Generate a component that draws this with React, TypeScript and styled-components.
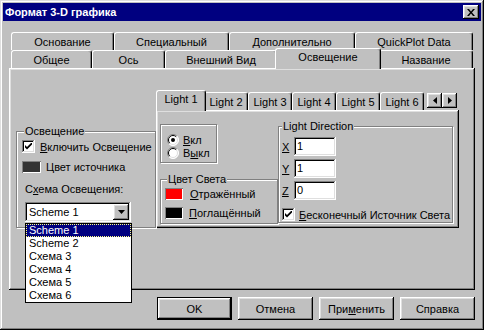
import React from "react";
import styled, { createGlobalStyle, css } from "styled-components";

const GlobalStyle = createGlobalStyle`
  html, body {
    margin: 0;
    padding: 0;
    background: #c0c0c0;
  }
  body {
    font-family: "Liberation Sans", Arial, sans-serif;
    font-size: 11px;
    color: #000;
  }
  * {
    box-sizing: border-box;
  }
`;

const raised = css`
  box-shadow: inset -1px -1px #000, inset 1px 1px #fff, inset -2px -2px #808080, inset 2px 2px #dfdfdf;
`;

const sunken = css`
  box-shadow: inset -1px -1px #fff, inset 1px 1px #808080, inset -2px -2px #dfdfdf, inset 2px 2px #000;
`;

const Window = styled.div`
  width: 484px;
  height: 330px;
  padding: 3px;
  background: #c0c0c0;
  display: flex;
  flex-direction: column;
  box-shadow: inset -1px -1px #000, inset 1px 1px #dfdfdf, inset -2px -2px #808080, inset 2px 2px #fff;
`;

const TitleBar = styled.div`
  height: 18px;
  background: #000080;
  color: #fff;
  display: flex;
  align-items: center;
  justify-content: space-between;
  padding: 0 2px 0 2px;
`;

const TitleText = styled.span`
  font-weight: bold;
  font-size: 11px;
`;

const CloseButton = styled.div`
  width: 16px;
  height: 14px;
  background: #c0c0c0;
  display: flex;
  align-items: center;
  justify-content: center;
  ${raised}
`;

const Body = styled.div`
  display: flex;
  flex-direction: column;
  padding: 11px 6px 0 6px;
`;

const TabStrip = styled.div`
  display: flex;
  flex-direction: column;
  padding: 0 2px;
`;

const TabRow = styled.div`
  display: flex;
  align-items: flex-start;
  height: 18px;
`;

const Tab = styled.div<{ $w: number; $active?: boolean }>`
  position: relative;
  width: ${(p) => p.$w}px;
  height: 18px;
  flex: none;
  display: flex;
  align-items: center;
  justify-content: center;
  white-space: nowrap;
  background: #c0c0c0;
  border-top: 1px solid #fff;
  border-left: 1px solid #fff;
  border-right: 1px solid #000;
  border-radius: 3px 3px 0 0;
  box-shadow: inset -1px 0 #808080;
  ${(p) =>
    p.$active &&
    css`
      width: ${p.$w + 4}px;
      height: 21px;
      margin: -2px -2px -1px -2px;
      padding-bottom: 4px;
      z-index: 2;
    `}
`;

const Panel = styled.div`
  width: 466px;
  height: 222px;
  display: flex;
  align-items: flex-start;
  padding: 22px 0 0 7px;
  ${raised}
`;

const Group = styled.div<{ $w: number; $h: number }>`
  position: relative;
  flex: none;
  width: ${(p) => p.$w}px;
  height: ${(p) => p.$h}px;
  border: 1px solid #808080;
  box-shadow: inset 1px 1px #fff, 1px 1px #fff;
`;

const Caption = styled.span<{ $left: number }>`
  position: absolute;
  top: -7px;
  left: ${(p) => p.$left}px;
  padding: 0 1px;
  line-height: 13px;
  background: #c0c0c0;
  white-space: nowrap;
`;

const LightingGroup = styled(Group)`
  margin-top: 41px;
  padding: 8px 0 0 5px;
  display: flex;
  flex-direction: column;
`;

const Row = styled.div<{ $gap: number; $top?: number }>`
  display: flex;
  align-items: center;
  gap: ${(p) => p.$gap}px;
  height: 13px;
  margin-top: ${(p) => p.$top ?? 0}px;
  white-space: nowrap;
`;

const CheckBox = styled.span`
  width: 13px;
  height: 13px;
  flex: none;
  background: #fff;
  display: flex;
  align-items: center;
  justify-content: center;
  ${sunken}
`;

const Swatch = styled.span<{ $color: string; $w: number }>`
  width: ${(p) => p.$w}px;
  height: 12px;
  flex: none;
  background: ${(p) => p.$color};
  box-shadow: inset 1px 1px #808080, inset -1px -1px #fff;
`;

const FieldLabel = styled.div`
  margin: 10px 0 0 3px;
  line-height: 13px;
`;

const Combo = styled.div`
  position: relative;
  width: 106px;
  height: 20px;
  margin: 6px 0 0 3px;
  background: #fff;
  display: flex;
  align-items: center;
  justify-content: space-between;
  padding: 0 2px 0 4px;
  ${sunken}
`;

const DropButton = styled.span`
  width: 16px;
  height: 16px;
  background: #c0c0c0;
  display: flex;
  align-items: center;
  justify-content: center;
  ${raised}
`;

const DropList = styled.div`
  position: absolute;
  top: 21px;
  left: 0;
  width: 107px;
  background: #fff;
  border: 1px solid #000;
  z-index: 10;
`;

const DropItem = styled.div<{ $selected?: boolean }>`
  height: 13px;
  line-height: 11px;
  padding-left: 2px;
  border: 1px solid transparent;
  ${(p) =>
    p.$selected &&
    css`
      background: #000080;
      color: #fff;
      border: 1px dotted #ffff80;
    `}
`;

const InnerTabs = styled.div`
  width: 303px;
  flex: none;
  display: flex;
  flex-direction: column;
`;

const InnerTabRow = styled.div`
  display: flex;
  align-items: flex-start;
  height: 18px;
  margin-top: 2px;
  padding-left: 2px;
`;

const ScrollArrows = styled.div`
  display: flex;
  margin: 1px 2px 0 auto;
`;

const ArrowButton = styled.span`
  width: 15px;
  height: 15px;
  background: #c0c0c0;
  display: flex;
  align-items: center;
  justify-content: center;
  ${raised}
`;

const InnerPanel = styled.div`
  height: 118px;
  display: flex;
  align-items: flex-start;
  padding: 14px 0 0 4px;
  ${raised}
`;

const LeftColumn = styled.div`
  width: 118px;
  flex: none;
  display: flex;
  flex-direction: column;
`;

const RadioBox = styled(Group)`
  padding: 8px 0 0 6px;
`;

const ColorBox = styled(Group)`
  margin-top: 16px;
  padding: 7px 0 0 4px;
`;

const DirectionBox = styled(Group)`
  margin-top: 2px;
  padding: 10px 0 0 3px;
`;

const AxisRow = styled.div<{ $top: number }>`
  display: flex;
  align-items: center;
  height: 19px;
  margin-top: ${(p) => p.$top}px;
`;

const AxisLabel = styled.span`
  width: 12px;
`;

const NumberField = styled.div`
  width: 42px;
  height: 19px;
  background: #fff;
  line-height: 19px;
  padding-left: 3px;
  ${sunken}
`;

const ButtonRow = styled.div`
  display: flex;
  justify-content: flex-end;
  gap: 6px;
  margin-top: 7px;
`;

const Button = styled.button<{ $default?: boolean }>`
  width: 75px;
  height: 23px;
  padding: 0;
  font: inherit;
  color: #000;
  background: #c0c0c0;
  border: ${(p) => (p.$default ? "1px solid #000" : "none")};
  ${raised}
`;

const Check = () => (
  <svg width="7" height="7" viewBox="0 0 7 7">
    <path d="M0 2 L2 4 L7 -1 L7 1.5 L2 6.5 L0 4.5 Z" fill="#000" />
  </svg>
);

const Radio = ({ on }: { on?: boolean }) => (
  <svg width="12" height="12" viewBox="0 0 12 12" style={{ flex: "none" }}>
    <circle cx="6" cy="6" r="5.5" fill="#fff" />
    <path d="M2.1 9.9 A5.5 5.5 0 0 1 9.9 2.1" stroke="#808080" fill="none" />
    <path d="M9.9 2.1 A5.5 5.5 0 0 1 2.1 9.9" stroke="#fff" fill="none" />
    <path d="M2.8 9.2 A4.5 4.5 0 0 1 9.2 2.8" stroke="#000" fill="none" />
    <path d="M9.2 2.8 A4.5 4.5 0 0 1 2.8 9.2" stroke="#dfdfdf" fill="none" />
    {on && <circle cx="6" cy="6" r="2" fill="#000" />}
  </svg>
);

const outerRow1 = [
  { label: "Основание", w: 103 },
  { label: "Специальный", w: 115 },
  { label: "Дополнительно", w: 126 },
  { label: "QuickPlot Data", w: 118 },
];

const outerRow2 = [
  { label: "Общее", w: 81 },
  { label: "Ось", w: 73 },
  { label: "Внешний Вид", w: 112 },
  { label: "Освещение", w: 102, active: true },
  { label: "Название", w: 94 },
];

const lightTabs = ["Light 1", "Light 2", "Light 3", "Light 4", "Light 5", "Light 6"];

const schemes = ["Scheme 1", "Scheme 2", "Схема 3", "Схема 4", "Схема 5", "Схема 6"];

const App = () => {
  return (
    <>
      <GlobalStyle />
      <Window>
        <TitleBar>
          <TitleText>Формат 3-D графика</TitleText>
          <CloseButton>
            <svg width="8" height="7" viewBox="0 0 8 7">
              <path d="M0 0 H2 L4 2.4 L6 0 H8 L5 3.5 L8 7 H6 L4 4.6 L2 7 H0 L3 3.5 Z" fill="#000" />
            </svg>
          </CloseButton>
        </TitleBar>
        <Body>
          <TabStrip>
            <TabRow>
              {outerRow1.map((t) => (
                <Tab key={t.label} $w={t.w}>
                  {t.label}
                </Tab>
              ))}
            </TabRow>
            <TabRow>
              {outerRow2.map((t) => (
                <Tab key={t.label} $w={t.w} $active={t.active}>
                  {t.label}
                </Tab>
              ))}
            </TabRow>
          </TabStrip>
          <Panel>
            <LightingGroup $w={140} $h={97}>
              <Caption $left={7}>Освещение</Caption>
              <Row $gap={5}>
                <CheckBox>
                  <Check />
                </CheckBox>
                <span>
                  <u>В</u>ключить Освещение
                </span>
              </Row>
              <Row $gap={5} $top={7}>
                <Swatch $color="#333333" $w={19} />
                <span>Цвет источника</span>
              </Row>
              <FieldLabel>
                С<u>х</u>ема Освещения:
              </FieldLabel>
              <Combo>
                <span>Scheme 1</span>
                <DropButton>
                  <svg width="7" height="4" viewBox="0 0 7 4">
                    <path d="M0 0 H7 L3.5 4 Z" fill="#000" />
                  </svg>
                </DropButton>
                <DropList>
                  {schemes.map((s, i) => (
                    <DropItem key={s} $selected={i === 0}>
                      {s}
                    </DropItem>
                  ))}
                </DropList>
              </Combo>
            </LightingGroup>

            <InnerTabs>
              <InnerTabRow>
                {lightTabs.map((t, i) => (
                  <Tab key={t} $w={i === 0 ? 46 : 44} $active={i === 0}>
                    {t}
                  </Tab>
                ))}
                <ScrollArrows>
                  <ArrowButton>
                    <svg width="4" height="7" viewBox="0 0 4 7">
                      <path d="M4 0 V7 L0 3.5 Z" fill="#000" />
                    </svg>
                  </ArrowButton>
                  <ArrowButton>
                    <svg width="4" height="7" viewBox="0 0 4 7">
                      <path d="M0 0 V7 L4 3.5 Z" fill="#000" />
                    </svg>
                  </ArrowButton>
                </ScrollArrows>
              </InnerTabRow>
              <InnerPanel>
                <LeftColumn>
                  <RadioBox $w={57} $h={39}>
                    <Row $gap={4}>
                      <Radio on />
                      <span>
                        <u>В</u>кл
                      </span>
                    </Row>
                    <Row $gap={4}>
                      <Radio />
                      <span>
                        В<u>ы</u>кл
                      </span>
                    </Row>
                  </RadioBox>
                  <ColorBox $w={118} $h={45}>
                    <Caption $left={6}>Цвет Света</Caption>
                    <Row $gap={7}>
                      <Swatch $color="#ff0000" $w={18} />
                      <span>
                        <u>О</u>тражённый
                      </span>
                    </Row>
                    <Row $gap={6} $top={6}>
                      <Swatch $color="#000000" $w={18} />
                      <span>
                        <u>П</u>оглащённый
                      </span>
                    </Row>
                  </ColorBox>
                </LeftColumn>
                <DirectionBox $w={175} $h={97}>
                  <Caption $left={3}>Light Direction</Caption>
                  {[
                    { axis: "X", value: "1" },
                    { axis: "Y", value: "1" },
                    { axis: "Z", value: "0" },
                  ].map((a, i) => (
                    <AxisRow key={a.axis} $top={i === 0 ? 0 : 3}>
                      <AxisLabel>
                        <u>{a.axis}</u>
                      </AxisLabel>
                      <NumberField>{a.value}</NumberField>
                    </AxisRow>
                  ))}
                  <Row $gap={4} $top={8}>
                    <CheckBox>
                      <Check />
                    </CheckBox>
                    <span>
                      <u>Б</u>есконечный Источник Света
                    </span>
                  </Row>
                </DirectionBox>
              </InnerPanel>
            </InnerTabs>
          </Panel>
          <ButtonRow>
            <Button $default>OK</Button>
            <Button>Отмена</Button>
            <Button>
              При<u>м</u>енить
            </Button>
            <Button>Справка</Button>
          </ButtonRow>
        </Body>
      </Window>
    </>
  );
};

export default App;
